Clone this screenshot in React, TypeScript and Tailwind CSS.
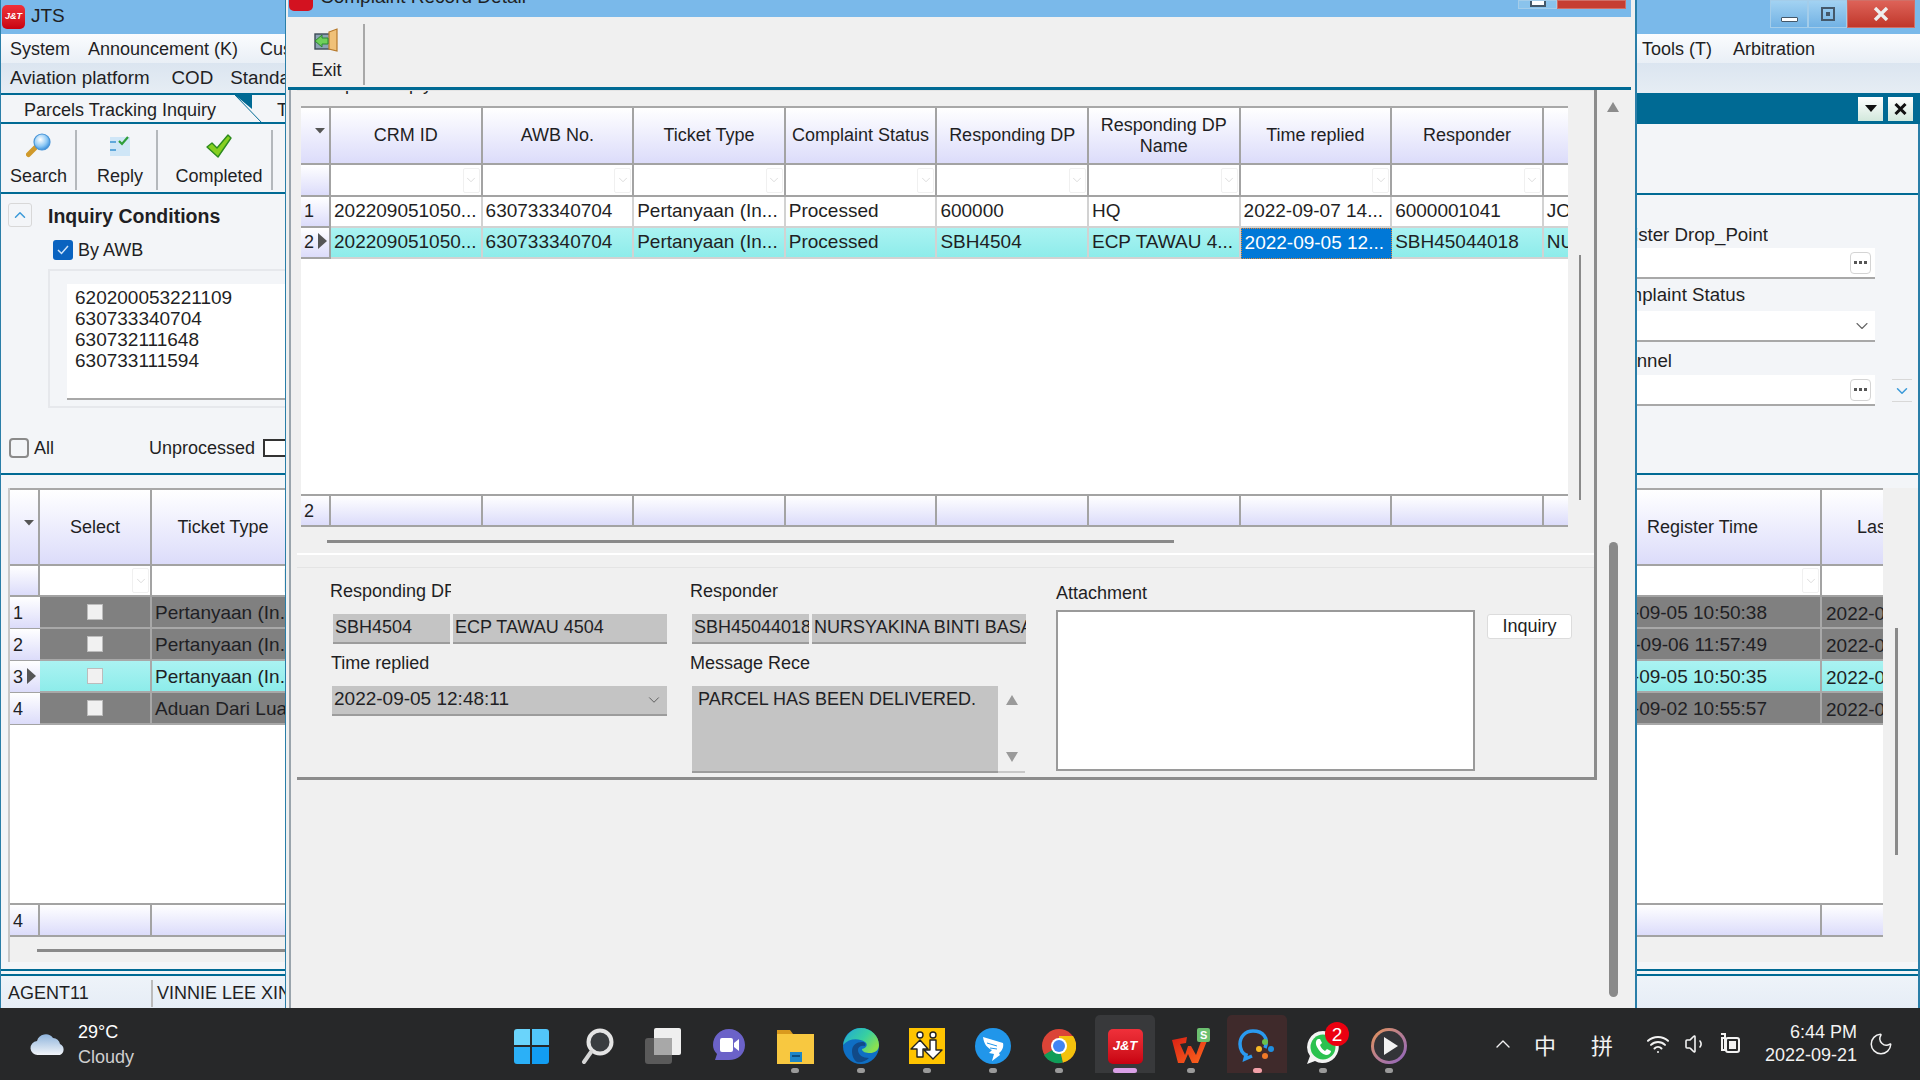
import { ChevronDown, ChevronUp, Moon, Volume1, Wifi } from "lucide-react";

const detailHeaders = [
	"CRM ID",
	"AWB No.",
	"Ticket Type",
	"Complaint Status",
	"Responding DP",
	"Responding DP Name",
	"Time replied",
	"Responder",
	"",
];

const detailRows = [
	["202209051050...", "630733340704", "Pertanyaan (In...", "Processed", "600000", "HQ", "2022-09-07 14...", "6000001041", "JOHN"],
	["202209051050...", "630733340704", "Pertanyaan (In...", "Processed", "SBH4504", "ECP TAWAU 4...", "2022-09-05 12...", "SBH45044018", "NURSYAKINA"],
];

const leftRows = [
	{ type: "Pertanyaan (In...", selected: false },
	{ type: "Pertanyaan (In...", selected: false },
	{ type: "Pertanyaan (In...", selected: true },
	{ type: "Aduan Dari Luar", selected: false },
];

const rightRows = [
	{ time: "2022-09-05 10:50:38", selected: false },
	{ time: "2022-09-06 11:57:49", selected: false },
	{ time: "2022-09-05 10:50:35", selected: true },
	{ time: "2022-09-02 10:55:57", selected: false },
];

const headBg = "bg-linear-to-b from-white to-[#dcdcfa]";
const cyanBg = "bg-linear-to-b from-[#aaf3f2] to-[#8decea]";

function LogoBadge({ className }: { className: string }) {
	return (
		<div
			className={`flex items-center justify-center rounded-[5px] bg-linear-to-b from-[#f0303a] to-[#c80010] font-bold italic text-white ${className}`}
		>
			J&amp;T
		</div>
	);
}

function SortCorner() {
	return (
		<svg width="12" height="7" viewBox="0 0 12 7" className="mb-[10px] ml-[10px]">
			<path d="M1 1h10L6 6.5z" fill="#555" />
		</svg>
	);
}

function RowPointer() {
	return (
		<svg width="9" height="16" viewBox="0 0 9 16" className="mb-[4px] ml-[4px]">
			<path d="M0 0l9 8-9 8z" fill="#555" />
		</svg>
	);
}

function FilterCell({ border = true }: { border?: boolean }) {
	return (
		<div
			className={`flex items-center justify-end border-b-2 border-[#a3a3a3] bg-white pr-[1px] ${border ? "border-r-2" : ""}`}
		>
			<div className="flex h-[25px] w-[17px] items-center justify-center rounded-[2px] border border-[#f0f0f0]">
				<ChevronDown size={14} strokeWidth={1.2} color="#cfcfcf" />
			</div>
		</div>
	);
}

function SearchIcon() {
	return (
		<svg width="26" height="26" viewBox="0 0 26 26">
			<defs>
				<radialGradient id="lens" cx="40%" cy="35%" r="70%">
					<stop offset="0%" stopColor="#ffffff" />
					<stop offset="60%" stopColor="#8cc8f5" />
					<stop offset="100%" stopColor="#2f86d6" />
				</radialGradient>
			</defs>
			<path d="M9.500 14.500L2.500 21.500" stroke="#d09a2c" strokeWidth="5" strokeLinecap="round" />
			<circle cx="16" cy="9" r="8" fill="url(#lens)" stroke="#4a96d8" strokeWidth="1.2" />
		</svg>
	);
}

function ReplyIcon() {
	return (
		<svg width="22" height="22" viewBox="0 0 22 22">
			<rect x="1" y="2" width="20" height="19" fill="#cfe6f7" />
			<path d="M1 7h6M1 15h6" stroke="#3d94d2" strokeWidth="1.4" />
			<path d="M10 6l3 3 6-7" fill="none" stroke="#2f9e3a" strokeWidth="2.2" />
		</svg>
	);
}

function CheckIcon() {
	return (
		<svg width="26" height="24" viewBox="0 0 26 24">
			<path d="M1 13l5-4 5 5L22 1l3 3-13 19z" fill="#86d020" stroke="#2c8a1e" strokeWidth="1.4" strokeLinejoin="round" />
		</svg>
	);
}

function ExitIcon() {
	return (
		<svg width="25" height="25" viewBox="0 0 25 25">
			<rect x="1" y="6" width="15" height="15" fill="#8da3b4" stroke="#3c4a56" strokeWidth="1.4" />
			<path d="M15 4l8-3v22l-8-2z" fill="#f0c178" stroke="#b77a2c" strokeWidth="1.2" />
			<path d="M1 13l7-6v3h6v6H8v3z" fill="#6fd05a" stroke="#2a8a2f" strokeWidth="1" />
		</svg>
	);
}

function DotsButton() {
	return (
		<div className="flex h-[22px] w-[21px] items-center justify-center gap-[2px] rounded-[4px] border border-[#d4d4d4] bg-white">
			<span className="size-[3px] bg-[#555]" />
			<span className="size-[3px] bg-[#555]" />
			<span className="size-[3px] bg-[#555]" />
		</div>
	);
}

function CloseMark() {
	return (
		<svg width="16" height="14" viewBox="0 0 16 14">
			<path d="M2 1l12 12M14 1L2 13" stroke="#eeeeee" strokeWidth="3.4" />
		</svg>
	);
}

function WindowButtons() {
	return (
		<div className="flex h-[28px] items-stretch">
			<div className="flex w-[38px] items-end justify-center border border-[#a4cdea] bg-linear-to-b from-[#a2d2f2] to-[#72b2e4] pb-[5px]">
				<span className="h-[5px] w-[17px] rounded-[1px] border border-[#44586a] bg-white" />
			</div>
			<div className="flex w-[39px] items-center justify-center border border-[#a4cdea] bg-linear-to-b from-[#a2d2f2] to-[#72b2e4]">
				<span className="flex size-[14px] items-center justify-center border-2 border-[#44586a]">
					<span className="size-[4px] bg-[#44586a]" />
				</span>
			</div>
			<div className="flex w-[68px] items-center justify-center border border-[#d07068] bg-linear-to-b from-[#dd6258] to-[#c0362a]">
				<CloseMark />
			</div>
		</div>
	);
}

function TaskIcon({
	children,
	dot = false,
	highlight = "",
	indicator = "",
}: {
	children: React.ReactNode;
	dot?: boolean;
	highlight?: string;
	indicator?: string;
}) {
	return (
		<div className="flex w-[66px] flex-col items-center">
			<div className={`mt-[7px] flex h-[58px] w-[60px] flex-col items-center rounded-t-[5px] ${highlight}`}>
				<div className="mt-[13px] flex h-[36px] items-center justify-center">{children}</div>
				<div className="mt-[3px] flex h-[6px] items-center justify-center">
					{dot && <span className="h-[5px] w-[8px] rounded-full bg-[#9a9a9a]" />}
					{indicator && <span className={`h-[5px] rounded-full ${indicator}`} />}
				</div>
			</div>
		</div>
	);
}

function Taskbar() {
	return (
		<div className="flex h-[72px] shrink-0 items-stretch bg-[#272829] text-white">
			<div className="flex w-[498px] items-center pl-[30px]">
				<svg width="37" height="24" viewBox="0 0 37 24">
					<defs>
						<linearGradient id="cloud" x1="0" y1="0" x2="0" y2="1">
							<stop offset="0%" stopColor="#8fb4dc" />
							<stop offset="100%" stopColor="#f2f5f9" />
						</linearGradient>
					</defs>
					<path d="M8 23a7 7 0 0 1-1-14 9 9 0 0 1 16-3 7 7 0 0 1 7 6 6 6 0 0 1 0 11z" fill="url(#cloud)" />
				</svg>
				<div className="ml-[11px] flex flex-col gap-[3px] text-[18px] leading-[22px]">
					<span>29°C</span>
					<span className="text-[#cfcfcf]">Cloudy</span>
				</div>
			</div>

			<div className="flex w-[924px] items-stretch">
				<TaskIcon>
					<div className="grid size-[35px] grid-cols-2 gap-[2px]">
						<span className="rounded-tl-[3px] bg-[#6ad4fb]" />
						<span className="rounded-tr-[3px] bg-[#52c6fa]" />
						<span className="rounded-bl-[3px] bg-[#2bb0f7]" />
						<span className="rounded-br-[3px] bg-[#129df2]" />
					</div>
				</TaskIcon>
				<TaskIcon>
					<svg width="34" height="36" viewBox="0 0 34 36">
						<circle cx="20" cy="14" r="11.5" fill="#3a3d40" stroke="#e4e4e4" strokeWidth="4" />
						<path d="M11 24L4 34" stroke="#d6d6d6" strokeWidth="4" strokeLinecap="round" />
					</svg>
				</TaskIcon>
				<TaskIcon>
					<svg width="36" height="36" viewBox="0 0 36 36">
						<rect x="0" y="10" width="27" height="26" rx="3" fill="#5a5a5a" />
						<rect x="9" y="0" width="27" height="27" rx="2" fill="#efefef" />
						<rect x="9" y="10" width="18" height="17" fill="#a8a8a8" />
					</svg>
				</TaskIcon>
				<TaskIcon>
					<svg width="34" height="36" viewBox="0 0 34 36">
						<path d="M17 1c9 0 16 7 16 16s-7 15-16 15H3l2-6C2 23 1 20 1 17 1 8 8 1 17 1z" fill="#6b62c8" />
						<rect x="8" y="10" width="13" height="14" rx="2" fill="#fff" />
						<path d="M22 15l5-4v12l-5-4z" fill="#fff" />
					</svg>
				</TaskIcon>
				<TaskIcon dot>
					<svg width="37" height="36" viewBox="0 0 37 36">
						<path d="M0 2h13l3 4h21v30H0z" fill="#d99a1e" />
						<rect x="0" y="6" width="37" height="30" fill="#f8c840" />
						<path d="M13 24h12v10H13z" fill="#1d86c8" />
						<rect x="15" y="27" width="8" height="2" fill="#0c4f80" />
					</svg>
				</TaskIcon>
				<TaskIcon dot>
					<svg width="36" height="36" viewBox="0 0 36 36">
						<defs>
							<linearGradient id="edge" x1="0" y1="0" x2="1" y2="0.6">
								<stop offset="0%" stopColor="#1fa6d8" />
								<stop offset="60%" stopColor="#38d0a0" />
								<stop offset="100%" stopColor="#8ae050" />
							</linearGradient>
						</defs>
						<circle cx="18" cy="18" r="18" fill="#0f6fc4" />
						<path d="M0 17C2 6 10 0 18 0c10 0 18 8 18 17 0 6-5 8-9 8-4 0-8-1-8-4 5-1 6-5 3-7C16 10 6 10 0 17z" fill="url(#edge)" />
						<path d="M9 23c0-6 5-9 10-9 3 0 4 2 3 4-4-1-7 1-7 4 0 5 5 8 11 8-3 3-8 5-12 4-3-2-5-6-5-11z" fill="#114a88" />
					</svg>
				</TaskIcon>
				<TaskIcon dot>
					<svg width="36" height="36" viewBox="0 0 36 36">
						<rect width="36" height="36" fill="#ffc400" />
						<circle cx="11" cy="7" r="3" fill="#fff" stroke="#222" strokeWidth="1.4" />
						<circle cx="24" cy="7" r="3" fill="#fff" stroke="#222" strokeWidth="1.4" />
						<path d="M11 12L2 21h6v8h6v-8h5z" fill="#fff" stroke="#222" strokeWidth="1.4" strokeLinejoin="round" />
						<path d="M21 12h6v10h6L24 31l-9-9h6z" fill="#fff" stroke="#222" strokeWidth="1.4" strokeLinejoin="round" />
					</svg>
				</TaskIcon>
				<TaskIcon dot>
					<svg width="36" height="36" viewBox="0 0 36 36">
						<circle cx="18" cy="18" r="18" fill="#2196ea" />
						<path d="M8 9l20 6c1 4-1 8-4 10l1 2-8 6 2-7-5-1 3-3c-5-2-8-6-9-13z" fill="#fff" />
						<path d="M12 15l10 3M15 20l7 1" stroke="#2196ea" strokeWidth="1" />
					</svg>
				</TaskIcon>
				<TaskIcon dot>
					<svg width="34" height="36" viewBox="0 0 34 36">
						<circle cx="17" cy="18" r="17" fill="#db4437" />
						<path d="M17 18L2 27A17 17 0 0 0 21 34.500z" fill="#0f9d58" />
						<path d="M17 18l4 16.500A17 17 0 0 0 31 8H17z" fill="#f4c20d" />
						<circle cx="17" cy="18" r="8" fill="#fff" />
						<circle cx="17" cy="18" r="6" fill="#4285f4" />
					</svg>
				</TaskIcon>
				<TaskIcon highlight="bg-[#38393b]" indicator="w-[24px] bg-[#d9a0e6]">
					<LogoBadge className="h-[35px] w-[35px] text-[13px]" />
				</TaskIcon>
				<TaskIcon dot>
					<svg width="42" height="36" viewBox="0 0 42 36">
						<defs>
							<linearGradient id="wps" x1="0" y1="0" x2="1" y2="1">
								<stop offset="0%" stopColor="#d81e14" />
								<stop offset="100%" stopColor="#ff6a1e" />
							</linearGradient>
						</defs>
						<path d="M2 12l15-3-1 6-6 1 5 11 3-9 3 0 5 9 7-19h6l-11 27h-6l-4-9-4 9h-6z" fill="url(#wps)" />
						<rect x="27" y="0" width="13" height="14" rx="2" fill="#6cc070" />
						<text x="30" y="11" fontSize="11" fontWeight="700" fill="#fff">
							S
						</text>
					</svg>
				</TaskIcon>
				<TaskIcon highlight="bg-[#3f2a2b]" indicator="w-[9px] bg-[#f2a0a8]">
					<svg width="38" height="36" viewBox="0 0 38 36">
						<path d="M27 20C31 10 25 3 15 3 7 3 2 9 2 16c0 6 3 10 6 11l-1 4 7-3" fill="none" stroke="#2a9af0" strokeWidth="3.5" />
						<circle cx="27" cy="14" r="3" fill="#6ac04c" />
						<circle cx="33" cy="21" r="3" fill="#1f8fe0" />
						<circle cx="27" cy="28" r="3" fill="#f07a28" />
						<circle cx="21" cy="21" r="3" fill="#f8b825" />
					</svg>
				</TaskIcon>
				<TaskIcon dot>
					<div className="relative size-[38px]">
						<svg width="34" height="36" viewBox="0 0 34 36" className="absolute bottom-0 left-[2px]">
							<path d="M17 2a16 16 0 1 1-8 30L1 35l3-8A16 16 0 0 1 17 2z" fill="#f4f4f4" />
							<circle cx="17" cy="18" r="12.500" fill="#2bc24f" />
							<path d="M12 10c-2 1-3 4-1 8s5 7 9 8c3 0 5-2 5-4l-4-2-2 2c-2-1-4-3-5-6l2-2-2-4z" fill="#fff" />
						</svg>
						<div className="absolute -right-[7px] -top-[5px] flex size-[24px] items-center justify-center rounded-full bg-[#ec0010] text-[19px] leading-none text-white">
							2
						</div>
					</div>
				</TaskIcon>
				<TaskIcon dot>
					<div className="flex size-[36px] items-center justify-center rounded-full bg-linear-to-br from-[#e8934a] to-[#8d5fc0] p-[3px]">
						<div className="flex size-full items-center justify-center rounded-full bg-[#333438] pl-[3px]">
							<svg width="14" height="18" viewBox="0 0 14 18">
								<path d="M0 0l14 9-14 9z" fill="#f2f2f2" />
							</svg>
						</div>
					</div>
				</TaskIcon>
			</div>

			<div className="flex flex-1 items-center pl-[69px] text-[#f2f2f2]">
				<ChevronUp size={24} strokeWidth={1.4} />
				<span className="ml-[19px] font-['Noto_Sans_CJK_SC'] text-[22px] leading-none">中</span>
				<span className="ml-[35px] font-['Noto_Sans_CJK_SC'] text-[22px] leading-none">拼</span>
				<Wifi size={24} strokeWidth={2} className="ml-[33px]" />
				<Volume1 size={24} strokeWidth={1.6} className="ml-[14px]" />
				<svg width="24" height="24" viewBox="0 0 24 24" className="ml-[9px]">
					<path d="M4 2h4v4M5 6h3v12H5z" fill="none" stroke="#f2f2f2" strokeWidth="2" />
					<rect x="9" y="6" width="13" height="14" rx="2" fill="none" stroke="#f2f2f2" strokeWidth="2" />
					<rect x="12" y="9" width="7" height="8" fill="#f2f2f2" />
				</svg>
				<div className="ml-[27px] flex w-[89px] flex-col items-end text-[18px] leading-[23px]">
					<span>6:44 PM</span>
					<span className="whitespace-nowrap">2022-09-21</span>
				</div>
				<Moon size={26} strokeWidth={1.4} className="ml-[11px]" />
			</div>
		</div>
	);
}

function LeftPane() {
	return (
		<div className="flex w-[286px] shrink-0 flex-col overflow-hidden whitespace-nowrap border-x border-[#2a7ea8]">
			<div className="flex h-[34px] shrink-0 items-center bg-[#7ab9ea]">
				<LogoBadge className="ml-[1px] h-[24px] w-[23px] text-[9px]" />
				<span className="-mt-[2px] ml-[6px] text-[19px]">JTS</span>
			</div>
			<div className="h-[59px] shrink-0">
				<div className="flex h-[29px] items-center bg-linear-to-b from-[#fbfcfe] to-[#e9eff6] pl-[9px] pt-[2px] text-[18px]">
					<span>System</span>
					<span className="ml-[18px]">Announcement (K)</span>
					<span className="ml-[22px]">Customer</span>
				</div>
				<div className="flex h-[30px] items-center bg-linear-to-b from-[#dbe5f0] to-[#e6edf4] pl-[9px] text-[18.8px]">
					<span>Aviation platform</span>
					<span className="ml-[22px]">COD</span>
					<span className="ml-[17px]">Standard</span>
				</div>
			</div>
			<div className="relative flex h-[31px] shrink-0 items-center border-y-2 border-[#006a94] bg-[#f3f5f8] pl-[23px] pt-[3px] text-[18px]">
				<span>Parcels Tracking Inquiry</span>
				<span className="ml-[61px]">T</span>
				<svg width="30" height="29" viewBox="0 0 30 29" className="absolute left-[234px] top-0">
					<path d="M0 0h17v14z" fill="#006a94" />
					<path d="M0 0l28 29" stroke="#006a94" strokeWidth="1" />
				</svg>
			</div>
			<div className="flex h-[70px] shrink-0 items-stretch border-b-2 border-[#006a94] bg-[#f3f5f8] pb-[2px] pt-[6px] text-[18px]">
				<ToolButton width="w-[76px] pl-[1px]" label="Search">
					<SearchIcon />
				</ToolButton>
				<ToolButton width="w-[81px] pl-[7px]" label="Reply">
					<ReplyIcon />
				</ToolButton>
				<ToolButton width="w-[115px] pl-[9px]" label="Completed">
					<CheckIcon />
				</ToolButton>
			</div>

			<div className="flex h-[281px] shrink-0 flex-col border-b-2 border-[#006a94] bg-[#f3f5f8] pl-[7px] pt-[9px]">
				<div className="flex h-[24px] items-center">
					<div className="flex size-[24px] shrink-0 items-center justify-center rounded-[3px] border border-[#d8d8d8]">
						<ChevronUp size={18} color="#3b9ad9" strokeWidth={2} />
					</div>
					<span className="ml-[16px] mt-[4px] text-[19.5px] font-bold">Inquiry Conditions</span>
				</div>
				<div className="ml-[45px] mt-[12px] flex h-[22px] items-center">
					<div className="flex size-[20px] shrink-0 items-center justify-center rounded-[3px] bg-[#0a63c0]">
						<svg width="12" height="10" viewBox="0 0 12 10">
							<path d="M1 5l3.500 3.500L11 1" fill="none" stroke="#cfe4fa" strokeWidth="1.500" />
						</svg>
					</div>
					<span className="ml-[5px] text-[18px]">By AWB</span>
				</div>
				<div className="ml-[40px] mt-[8px] flex h-[139px] border-y-2 border-l-2 border-[#e6e8ec] pl-[17px] pt-[13px]">
					<div className="h-[116px] flex-1 border-b-2 border-[#a8a8a8] bg-white pl-[8px] pt-[3px] text-[19px] leading-[21px]">
						<div>620200053221109</div>
						<div>630733340704</div>
						<div>630732111648</div>
						<div>630733111594</div>
					</div>
				</div>
				<div className="mt-[29px] flex h-[22px] items-center">
					<div className="ml-[1px] size-[20px] shrink-0 rounded-[4px] border-2 border-[#8a8a8a] bg-[#f3f5f8]" />
					<span className="ml-[5px] text-[18px]">All</span>
					<span className="ml-[95px] text-[18px]">Unprocessed</span>
					<div className="ml-[8px] h-[18px] w-[40px] shrink-0 border-2 border-[#333] bg-white" />
				</div>
			</div>

			<div className="flex min-h-0 flex-1 flex-col bg-[#f3f5f8] pl-[7px] pt-[13px]">
				<div className="flex h-[474px] flex-col border-l-2 border-[#c8c8c8] bg-[#f0f0f0]">
					<div className="grid h-[449px] shrink-0 grid-cols-[30px_112px_150px] grid-rows-[76px_31px_repeat(4,32px)_minmax(0,1fr)_32px] border-t-2 border-[#a8a8a8] bg-white text-[18px]">
						<div className={`flex items-center justify-center border-b-2 border-r-2 border-[#a3a3a3] ${headBg}`}>
							<SortCorner />
						</div>
						<div className={`flex items-center justify-center border-b-2 border-r-2 border-[#a3a3a3] ${headBg}`}>Select</div>
						<div className={`flex items-center justify-center border-b-2 border-[#a3a3a3] pr-[8px] ${headBg}`}>Ticket Type</div>
						<div className={`border-b-2 border-r-2 border-[#a3a3a3] ${headBg}`} />
						<FilterCell />
						<FilterCell border={false} />
						{leftRows.map((row, i) => (
							<LeftRow key={i} index={i + 1} row={row} />
						))}
						<div className="col-span-3 border-b-2 border-[#a3a3a3] bg-white" />
						<div className={`flex items-center border-b-2 border-r-2 border-[#a3a3a3] pl-[3px] pt-[2px] ${headBg}`}>4</div>
						<div className={`border-b-2 border-r-2 border-[#a3a3a3] ${headBg}`} />
						<div className={`border-b-2 border-[#a3a3a3] ${headBg}`} />
					</div>
					<div className="ml-[27px] mt-[12px] h-[3px] bg-[#8a8a8a]" />
				</div>
			</div>
			<div className="h-[7px] shrink-0 border-y-2 border-[#006a94] bg-[#f3f5f8]" />
			<div className="flex h-[32px] shrink-0 items-center bg-linear-to-b from-[#eef3f9] to-[#e6edf6] pt-[2px] text-[18px]">
				<span className="w-[152px] shrink-0 border-r-2 border-[#bbb] pl-[7px]">AGENT11</span>
				<span className="ml-[4px]">VINNIE LEE XIN</span>
			</div>
		</div>
	);
}

function ToolButton({ width, label, children }: { width: string; label: string; children: React.ReactNode }) {
	return (
		<div className={`flex flex-col items-center border-r-2 border-[#b4b8bc] ${width}`}>
			<div className="flex h-[31px] items-center">{children}</div>
			<span className="mt-[3px] leading-[24px]">{label}</span>
		</div>
	);
}

function LeftRow({ index, row }: { index: number; row: { type: string; selected: boolean } }) {
	const bg = row.selected ? cyanBg : "bg-[#808080]";
	return (
		<>
			<div className={`flex items-center border-b border-[#a3a3a3] pl-[3px] pt-[2px] ${headBg}`}>
				{index}
				{row.selected && <RowPointer />}
			</div>
			<div className={`flex items-center justify-center border-b-2 border-r-2 border-[#a8a8a8] ${bg}`}>
				<span className="size-[16px] border border-[#bcbcbc] bg-[#f1f1f1]" />
			</div>
			<div className={`flex items-center border-b-2 border-[#a8a8a8] pl-[3px] pt-[2px] text-[19px] ${bg}`}>{row.type}</div>
		</>
	);
}

function DetailGrid() {
	return (
		<div className="grid h-[421px] w-[1267px] shrink-0 grid-cols-[30px_repeat(8,151.6px)_minmax(0,1fr)] grid-rows-[57px_32px_31px_31px_minmax(0,1fr)_31px] border-t-2 border-[#a8a8a8] bg-white text-[18px]">
			<div className={`flex items-center justify-center border-b-2 border-r-2 border-[#a3a3a3] ${headBg}`}>
				<SortCorner />
			</div>
			{detailHeaders.map((h, i) => (
				<div
					key={i}
					className={`flex items-center justify-center overflow-hidden whitespace-normal border-b-2 border-[#a3a3a3] px-[2px] text-center leading-[21px] ${headBg} ${i < 8 ? "border-r-2" : ""}`}
				>
					{h}
				</div>
			))}
			<div className={`border-b-2 border-r-2 border-[#a3a3a3] ${headBg}`} />
			{detailHeaders.map((_, i) =>
				i < 8 ? <FilterCell key={i} /> : <div key={i} className="border-b-2 border-[#a3a3a3] bg-white" />,
			)}
			{detailRows.map((row, r) => (
				<DetailRow key={r} index={r + 1} cells={row} selected={r === 1} />
			))}
			<div className="col-span-10 border-b-2 border-[#a3a3a3] bg-white" />
			<div className={`flex items-center border-b-2 border-r-2 border-[#a3a3a3] pl-[3px] pt-[2px] ${headBg}`}>2</div>
			{detailHeaders.map((_, i) => (
				<div key={i} className={`border-b-2 border-[#a3a3a3] ${headBg} ${i < 8 ? "border-r-2" : ""}`} />
			))}
		</div>
	);
}

function DetailRow({ index, cells, selected }: { index: number; cells: string[]; selected: boolean }) {
	return (
		<>
			<div className={`flex items-center border-b-2 border-r-2 border-[#a3a3a3] pl-[3px] ${headBg}`}>
				{index}
				{selected && <RowPointer />}
			</div>
			{cells.map((c, i) => {
				const active = selected && i === 6;
				return (
					<div
						key={i}
						className={`flex items-center overflow-hidden whitespace-nowrap pl-[3px] text-[19px] ${
							active
								? "border border-dotted border-[#e08a3a] bg-[#0078d7] text-white"
								: `border-b-2 border-[#d2d2d2] ${i < 8 ? "border-r-2" : ""} ${selected ? cyanBg : "bg-white"}`
						}`}
					>
						{c}
					</div>
				);
			})}
		</>
	);
}

function GreyField({ width, value }: { width: string; value: string }) {
	return (
		<div className={`flex h-[30px] items-center overflow-hidden whitespace-nowrap border-b-2 border-[#9c9c9c] bg-[#c4c4c4] pb-[1px] pl-[2px] text-[18px] ${width}`}>
			{value}
		</div>
	);
}

function DetailWindow() {
	return (
		<div className="flex w-[1349px] shrink-0 flex-col whitespace-nowrap bg-[#f0f0f0]">
			<div className="flex w-[1345px] flex-col border-l-2 border-[#f0f0f0]">
				<div className="flex h-[17px] items-start justify-between overflow-hidden bg-[#7ab9ea]">
					<div className="-mt-[17px] flex items-center pl-[1px]">
						<div className="h-[28px] w-[24px] rounded-[5px] bg-[#d31220]" />
						<span className="ml-[7px] text-[19px]">Complaint Record Detail</span>
					</div>
					<div className="mr-[5px] flex h-[9px]">
						<div className="flex w-[39px] items-start justify-center border border-[#a4cdea] bg-[#8ac3ec]">
							<span className="h-[6px] w-[16px] border-2 border-t-0 border-[#44586a] bg-white" />
						</div>
						<div className="w-[69px] border border-[#d07068] bg-[#c63e32]" />
					</div>
				</div>
				<div className="flex h-[70px] bg-[#f0f0f0] pb-[2px] pt-[7px] text-[18px]">
					<div className="flex w-[77px] flex-col items-center border-r-2 border-[#a8a8a8] pl-[2px]">
						<div className="flex h-[32px] items-center">
							<ExitIcon />
						</div>
						<span className="mt-[3px] leading-[22px]">Exit</span>
					</div>
				</div>
				<div className="h-[3px] bg-[#006a94]" />
			</div>

			<div className="ml-[3px] flex min-h-0 flex-1 border-l-2 border-[#9aa4ac]">
				<div className="flex w-[1306px] shrink-0 flex-col">
					<div className="ml-[6px] flex h-[690px] w-[1300px] flex-col border-b-[3px] border-r-[3px] border-[#8c8c8c]">
						<div className="h-[16px] shrink-0 overflow-hidden border-t border-[#e4e4e4] pl-[10px] text-[18px]">
							<div className="-mt-[20px]">Complaint reply</div>
						</div>
						<div className="ml-[4px] flex h-[421px] shrink-0">
							<DetailGrid />
							<div className="ml-[11px] mt-[149px] h-[245px] w-[2px] bg-[#8a8a8a]" />
						</div>
						<div className="ml-[30px] mt-[13px] h-[3px] w-[847px] shrink-0 bg-[#8a8a8a]" />
						<div className="mt-[10px] h-[2px] shrink-0 bg-white" />
						<div className="h-[13px] shrink-0 border-b border-[#e4e4e4]" />
						<div className="flex min-h-0 flex-1 pl-[33px] pt-[11px] text-[18px]">
							<div className="flex w-[360px] shrink-0 flex-col">
								<div className="flex h-[24px] w-[121px] items-center overflow-hidden">Responding DP</div>
								<div className="ml-[3px] mt-[11px] flex gap-[3px]">
									<GreyField width="w-[117px]" value="SBH4504" />
									<GreyField width="w-[214px]" value="ECP TAWAU 4504" />
								</div>
								<div className="mt-[7px] flex h-[24px] items-center pl-[1px]">Time replied</div>
								<div className="ml-[2px] mt-[11px] flex h-[30px] w-[335px] items-center justify-between border-b-2 border-[#9c9c9c] bg-[#c4c4c4] pb-[1px] pl-[2px] pr-[4px] text-[19px]">
									2022-09-05 12:48:11
									<ChevronDown size={18} strokeWidth={1.2} color="#555" />
								</div>
							</div>
							<div className="flex w-[366px] shrink-0 flex-col">
								<div className="flex h-[24px] items-center">Responder</div>
								<div className="ml-[2px] mt-[11px] flex gap-[3px]">
									<GreyField width="w-[117px]" value="SBH45044018" />
									<GreyField width="w-[214px]" value="NURSYAKINA BINTI BASAR" />
								</div>
								<div className="mt-[7px] flex h-[24px] w-[120px] items-center overflow-hidden">Message Received</div>
								<div className="ml-[2px] mt-[11px] flex h-[87px] w-[333px]">
									<div className="w-[306px] border-b-2 border-[#9c9c9c] bg-[#c4c4c4] pl-[6px] pt-[1px] leading-[24px]">
										PARCEL HAS BEEN DELIVERED.
									</div>
									<div className="flex flex-1 flex-col items-center justify-between border-b-2 border-[#c8c8c8] py-[9px]">
										<svg width="12" height="10" viewBox="0 0 12 10"><path d="M6 0l6 10H0z" fill="#9a9a9a" /></svg>
										<svg width="12" height="10" viewBox="0 0 12 10"><path d="M6 10l6-10H0z" fill="#9a9a9a" /></svg>
									</div>
								</div>
							</div>
							<div className="flex w-[431px] shrink-0 flex-col">
								<div className="mt-[2px] flex h-[24px] items-center">Attachment</div>
								<div className="mt-[5px] h-[161px] w-[419px] border-2 border-[#9a9a9a] bg-white" />
							</div>
							<div className="mt-[35px] flex h-[25px] w-[85px] items-center justify-center rounded-[3px] border border-[#dcdcdc] bg-white">
								Inquiry
							</div>
						</div>
					</div>
				</div>
				<div className="flex w-[38px] flex-col items-start pl-[10px]">
					<svg width="12" height="10" viewBox="0 0 12 10" className="mt-[12px]">
						<path d="M6 0l6 10H0z" fill="#8c8c8c" />
					</svg>
					<div className="ml-[2px] mt-[430px] h-[455px] w-[9px] rounded-full bg-[#8a8a8a]" />
				</div>
			</div>
		</div>
	);
}

function RightPane() {
	return (
		<div className="flex min-w-0 flex-1 flex-col overflow-hidden whitespace-nowrap border-l-2 border-[#2a7ea8]">
			<div className="flex h-[34px] shrink-0 items-start justify-end bg-[#7ab9ea] pr-[5px]">
				<WindowButtons />
			</div>
			<div className="h-[59px] shrink-0 text-[18px]">
				<div className="flex h-[29px] items-center gap-[21px] bg-linear-to-b from-[#fbfcfe] to-[#e9eff6] pl-[5px] pt-[2px]">
					<span>Tools (T)</span>
					<span>Arbitration</span>
				</div>
				<div className="h-[30px] bg-linear-to-b from-[#dbe5f0] to-[#e6edf4]" />
			</div>
			<div className="flex h-[31px] shrink-0 items-center justify-end gap-[5px] bg-[#006a94] pr-[7px]">
				<div className="flex h-[24px] w-[25px] items-center justify-center bg-linear-to-b from-white to-[#d2e8dc]">
					<svg width="12" height="7" viewBox="0 0 12 7"><path d="M0 0h12L6 7z" fill="#111" /></svg>
				</div>
				<div className="flex h-[24px] w-[25px] items-center justify-center bg-linear-to-b from-white to-[#d2e8dc]">
					<svg width="13" height="12" viewBox="0 0 13 12"><path d="M1.500 1l10 10M11.500 1l-10 10" stroke="#111" strokeWidth="3" /></svg>
				</div>
			</div>
			<div className="flex min-h-0 flex-1 flex-col border-r-2 border-[#2a7ea8] bg-[#f3f5f8]">
				<div className="h-[71px] shrink-0 border-b-2 border-[#006a94]" />
				<div className="flex h-[280px] shrink-0 flex-col border-b-2 border-[#006a94] pt-[28px] text-[18.7px]">
					<RightLabel text="Register Drop_Point" pad="w-[131px]" />
					<RightField margin="mt-[1px]">
						<DotsButton />
					</RightField>
					<RightLabel text="Complaint Status" pad="mt-[4px] w-[108px]" />
					<RightField margin="mt-[4px]">
						<ChevronDown size={20} strokeWidth={1.3} color="#666" className="-mr-[1px]" />
					</RightField>
					<RightLabel text="Channel" pad="mt-[7px] w-[35px]" />
					<div className="mt-[2px] flex items-center">
						<RightField margin="">
							<DotsButton />
						</RightField>
						<div className="ml-[17px] flex h-[23px] w-[20px] items-center justify-center border-y border-[#d8d8d8]">
							<ChevronDown size={18} strokeWidth={2} color="#3b9ad9" />
						</div>
					</div>
				</div>
				<div className="flex min-h-0 flex-1 flex-col pt-[13px] text-[18px]">
					<div className="flex h-[474px] bg-[#f0f0f0] pr-[7px]">
						<div className="grid h-[449px] w-[246px] shrink-0 grid-cols-[185px_61px] grid-rows-[76px_31px_repeat(4,32px)_minmax(0,1fr)_32px] border-t-2 border-[#a8a8a8] bg-white">
							<div className={`flex items-center border-b-2 border-r-2 border-[#a3a3a3] pl-[10px] ${headBg}`}>Register Time</div>
							<div className={`flex items-center overflow-hidden border-b-2 border-[#a3a3a3] pl-[35px] ${headBg}`}>Last</div>
							<FilterCell />
							<div className="border-b-2 border-[#a3a3a3] bg-white" />
							{rightRows.map((row, i) => (
								<RightRow key={i} row={row} />
							))}
							<div className="col-span-2 border-b-2 border-[#a3a3a3] bg-white" />
							<div className={`border-b-2 border-r-2 border-[#a3a3a3] ${headBg}`} />
							<div className={`border-b-2 border-[#a3a3a3] ${headBg}`} />
						</div>
						<div className="ml-[12px] mt-[140px] h-[227px] w-[3px] bg-[#8a8a8a]" />
					</div>
				</div>
				<div className="h-[7px] shrink-0 border-y-2 border-[#006a94] bg-[#f3f5f8]" />
				<div className="h-[32px] shrink-0 bg-linear-to-b from-[#eef3f9] to-[#e6edf6]" />
			</div>
		</div>
	);
}

function RightLabel({ text, pad }: { text: string; pad: string }) {
	return <div className={`flex h-[24px] shrink-0 items-center justify-end overflow-hidden ${pad}`}>{text}</div>;
}

function RightField({ children, margin }: { children: React.ReactNode; margin: string }) {
	return (
		<div className={`flex h-[31px] w-[238px] shrink-0 items-center justify-end border-b-2 border-[#a8a8a8] bg-white pr-[4px] ${margin}`}>
			{children}
		</div>
	);
}

function RightRow({ row }: { row: { time: string; selected: boolean } }) {
	const bg = row.selected ? cyanBg : "bg-[#808080]";
	return (
		<>
			<div className={`flex items-center justify-end overflow-hidden border-b-2 border-r-2 border-[#a8a8a8] pr-[53px] pt-[2px] text-[19px] ${bg}`}>
				{row.time}
			</div>
			<div className={`overflow-hidden border-b-2 border-[#a8a8a8] pl-[4px] pt-[2px] text-[19px] leading-[30px] ${bg}`}>2022-09-05</div>
		</>
	);
}

export default function App() {
	return (
		<div className="flex h-[1080px] w-[1920px] flex-col overflow-hidden font-['Liberation_Sans',sans-serif] text-[#1f1f24]">
			<div className="flex min-h-0 flex-1">
				<LeftPane />
				<DetailWindow />
				<RightPane />
			</div>
			<Taskbar />
		</div>
	);
}
